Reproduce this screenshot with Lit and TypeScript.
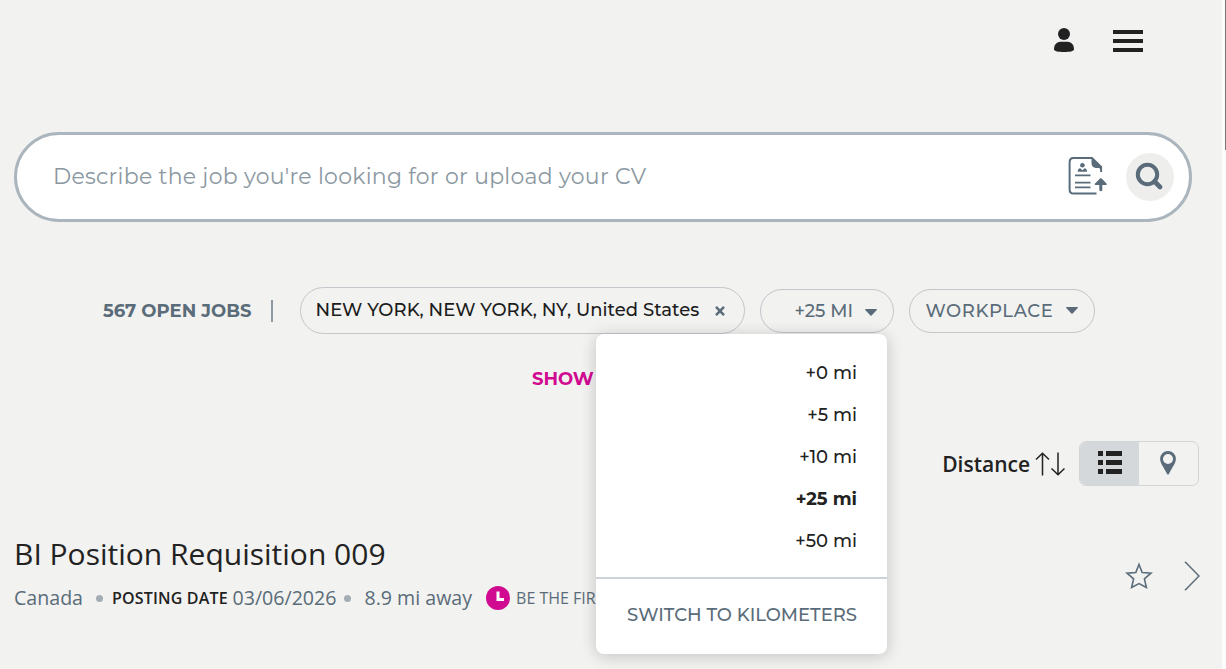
import { LitElement, html, css, svg } from "lit";
import { customElement, state } from "lit/decorators.js";
import { classMap } from "lit/directives/class-map.js";

const distances = [0, 5, 10, 25, 50];

const caret = html`<svg class="caret" viewBox="0 0 12 7" width="12" height="7"><path d="M0 .8Q0 0 1 0H11Q12 0 12 .8L6.6 6.6Q6 7 5.4 6.6Z" fill="currentColor"/></svg>`;

const rowLines = [0, 9, 18].map(
  (y) => svg`<rect x="0" y=${y} width="5" height="5"/><rect x="8" y=${y} width="16" height="5"/>`
);

@customElement("app-root")
export class AppRoot extends LitElement {
  @state() private radius = 25;

  static styles = css`
    :host { display: block; }
    * { box-sizing: border-box; }
    svg { display: block; flex: none; }
    .page {
      display: flex; width: 100%; height: 669px; overflow: hidden;
      background: #f2f2f0; color: #222;
      font-family: Montserrat, Inter, sans-serif; font-size: 18px; line-height: 24px; font-weight: 500;
      white-space: nowrap;
    }
    .main { flex: 1; min-width: 0; }
    .track { width: 4px; background: #fcfcfc; display: flex; justify-content: flex-end; }
    .thumb { width: 1px; height: 150px; background: #777; }
    .header { height: 132px; display: flex; justify-content: flex-end; align-items: flex-start; gap: 39px; padding: 28px 79px 0 0; }
    .burger { margin-top: 2px; }
    .search {
      margin: 0 30px 0 14px; height: 90px; border: 3px solid #abb5bd; border-radius: 45px;
      background: #fff; display: flex; align-items: center; padding: 0 15px 0 36px;
    }
    .placeholder { flex: 1; color: #8b98a1; font-size: 22px; line-height: 30px; font-weight: 400; letter-spacing: .26px; }
    .cv { margin: -2px 19px 0 0; }
    .go { width: 48px; height: 48px; border-radius: 50%; background: #eeeeed; display: grid; place-items: center; color: #5a6c79; }
    .go svg { margin: -2px 0 0 -2px; }
    .filters { margin-top: 65px; height: 47px; padding-left: 103px; display: flex; align-items: center; color: #5a6c79; }
    .count { width: 168px; font-weight: 700; }
    .divider { width: 2px; height: 22px; background: #8e9aa3; margin-right: 27px; }
    .chip { border: 1px solid #c2c7cb; border-radius: 24px; height: 44px; display: flex; align-items: center; margin-right: 15px; position: relative; }
    .place { width: 445px; height: 47px; padding: 0 19px 2px 14.5px; justify-content: space-between; color: #1c1c1c; letter-spacing: .03px; }
    .place svg { margin-top: 3px; }
    .miles { width: 134px; padding: 0 16px 0 33.5px; justify-content: space-between; }
    .miles > .caret { margin-top: 3px; }
    .work { width: 186px; padding: 0 16px 0 15.5px; justify-content: space-between; letter-spacing: .6px; }
    .menu {
      position: absolute; z-index: 2; top: 44px; right: 6px; width: 291px; height: 320px;
      border-radius: 8px; background: #fff; box-shadow: 0 2px 16px rgba(0,0,0,.2);
      padding-top: 18px; color: #222; text-align: right;
    }
    .option { height: 42px; line-height: 42px; padding-right: 30px; }
    .chosen { font-weight: 700; }
    .switch { margin-top: 15px; border-top: 2px solid #cdd2d6; height: 77px; line-height: 72px; padding-right: 30px; color: #5a6c79; }
    .show { margin-top: 33px; padding-left: 532px; height: 24px; color: #d10a92; font-weight: 700; }
    .sort { margin-top: 50px; height: 45px; display: flex; align-items: center; justify-content: flex-end; padding-right: 23px; }
    .by { font-family: "Open Sans", sans-serif; font-size: 21px; font-weight: 600; margin-right: 5px; }
    .arrows { margin-right: 14px; }
    .toggle { width: 120px; height: 45px; display: flex; border: 1px solid #d2d5d6; border-radius: 7px; overflow: hidden; }
    .view { flex: 1; display: grid; place-items: center; color: #5a6c79; }
    .view svg { margin: -2px 0 0 -1px; }
    .active { background: #d4d8da; color: #222; }
    .active svg { margin-left: 1px; }
    .job { margin-top: 48px; padding: 0 22px 0 14px; display: flex; font-family: "Open Sans", sans-serif; font-weight: 400; }
    .info { flex: 1; min-width: 0; }
    .title { font-size: 30px; line-height: 40px; font-weight: 400; margin: 0; }
    .meta { display: flex; align-items: center; margin-top: 10px; height: 28px; color: #5a6c79; font-size: 19.6px; }
    .dot { width: 7px; height: 7px; border-radius: 50%; background: #a4adb3; margin: 0 9px 0 13px; }
    .dot.wide { margin: 0 13px 0 8px; }
    .label { font-size: 16px; font-weight: 600; letter-spacing: .17px; color: #222; margin-right: 4.7px; }
    .clock { margin: 0 6px 0 14px; }
    .first { font-size: 16px; }
    .actions { display: flex; gap: 31px; align-items: center; height: 84px; }
  `;

  render() {
    return html`<div class="page">
      <div class="main">
        <header class="header">
          <svg width="20" height="24" viewBox="0 0 20 24" fill="#222"><circle cx="10" cy="6" r="6"/><path d="M6.5 13.7h7C18 13.7 20 17.5 20 21.5 20 23.2 15.5 24 10 24S0 23.2 0 21.5C0 17.5 2 13.7 6.5 13.7Z"/></svg>
          <svg class="burger" width="30" height="22" viewBox="0 0 30 22" fill="#222"><path d="M0 0H30V4H0ZM0 9H30V13H0ZM0 18H30V22H0Z"/></svg>
        </header>

        <div class="search">
          <div class="placeholder">Describe the job you're looking for or upload your CV</div>
          <svg class="cv" width="40" height="40" viewBox="0 0 40 40" fill="none" stroke="#5a6c79">
            <path d="M29.5 37.6H6.5Q2.6 37.6 2.6 33.2V6.4Q2.6 2 6.5 2H25L34.1 10.8V16" stroke-width="2"/>
            <path d="M24.5 1.5 34.8 11.5V14.5L32 12H29Q24.5 11.5 24.5 7Z" fill="#5a6c79" stroke="none"/>
            <path d="M8 19.3H23.5M8 26.7H23.5M8 31.3H23.5" stroke-width="1.7"/>
            <circle cx="15.4" cy="9.3" r="2.3" fill="#5a6c79" stroke="none"/>
            <path d="M10.7 15.8Q10.7 12.5 13.2 12.3L15.4 14.3 17.6 12.3Q20 12.5 20 15.8Z" fill="#5a6c79" stroke="none"/>
            <path d="M32.3 34.3Q33.8 36 35.3 34.3V29H39Q40.4 28.6 39.5 27.5L34.6 22.5Q33.8 21.8 33 22.5L28 27.5Q27.2 28.6 28.6 29H32.3Z" fill="#5a6c79" stroke="none"/>
          </svg>
          <div class="go"><svg width="28" height="28" viewBox="0 0 28 28" fill="none" stroke="currentColor"><circle cx="12.5" cy="12.5" r="9.7" stroke-width="4"/><path d="M19.5 19.5 25 25" stroke-width="4.6" stroke-linecap="round"/></svg></div>
        </div>

        <div class="filters">
          <div class="count">567 OPEN JOBS</div>
          <div class="divider"></div>
          <div class="chip place"><span>NEW YORK, NEW YORK, NY, United States</span>
            <svg width="10" height="10" viewBox="0 0 10 10"><path d="M1 .8 9 9.2M9 .8 1 9.2" stroke="#5a6c79" stroke-width="2.4"/></svg></div>
          <div class="chip miles"><span>+${this.radius} MI</span>${caret}
            <div class="menu">
              ${distances.map((d) => html`<div class=${classMap({ option: true, chosen: d === this.radius })} @click=${() => (this.radius = d)}>+${d} mi</div>`)}
              <div class="switch">SWITCH TO KILOMETERS</div>
            </div>
          </div>
          <div class="chip work"><span>WORKPLACE</span>${caret}</div>
        </div>

        <div class="show">SHOW</div>

        <div class="sort">
          <div class="by">Distance</div>
          <svg class="arrows" width="30" height="24" viewBox="0 0 30 24" fill="none" stroke="#222" stroke-width="1.5"><path d="M7.5 23.5V1.5M1 7.5 7.5 1.2 14 7.5M23 .5V22.5M16.5 16.5 23 22.8 29.5 16.5"/></svg>
          <div class="toggle">
            <div class="view active"><svg width="24" height="23" viewBox="0 0 24 23" fill="currentColor">${rowLines}</svg></div>
            <div class="view"><svg width="16" height="24" viewBox="0 0 16 24" fill="currentColor"><path fill-rule="evenodd" d="M8 0A7.9 7.9 0 0 1 15.9 7.9C15.9 12 12 16.5 8.7 23.2Q8 24 7.3 23.2C4 16.5.1 12 .1 7.9A7.9 7.9 0 0 1 8 0ZM8 3A5 5 0 1 0 8 13 5 5 0 0 0 8 3Z"/></svg></div>
          </div>
        </div>

        <div class="job">
          <div class="info">
            <h2 class="title">BI Position Requisition 009</h2>
            <div class="meta">
              <span>Canada</span><i class="dot"></i><span class="label">POSTING DATE</span><span>03/06/2026</span><i class="dot wide"></i><span>8.9 mi away</span>
              <svg class="clock" width="24" height="24" viewBox="0 0 24 24"><circle cx="12" cy="12" r="12" fill="#d10a92"/><path d="M12 5.5V13.5H18" fill="none" stroke="#fff" stroke-width="3"/></svg>
              <span class="first">BE THE FIRST TO APPLY</span>
            </div>
          </div>
          <div class="actions">
            <svg width="28" height="28" viewBox="0 0 28 28" fill="none" stroke="#5a6c79" stroke-width="1.6"><path d="M14 2.5 17.2 10.5 26 11.2 19.4 16.9 21.4 25.5 14 21.6 6.6 25.5 8.6 16.9 2 11.2 10.8 10.5Z"/></svg>
            <svg width="16" height="30" viewBox="0 0 16 30" fill="none" stroke="#5a6c79" stroke-width="1.5"><path d="M1 .7 15 15 1 29.3"/></svg>
          </div>
        </div>
      </div>
      <div class="track"><div class="thumb"></div></div>
    </div>`;
  }
}
